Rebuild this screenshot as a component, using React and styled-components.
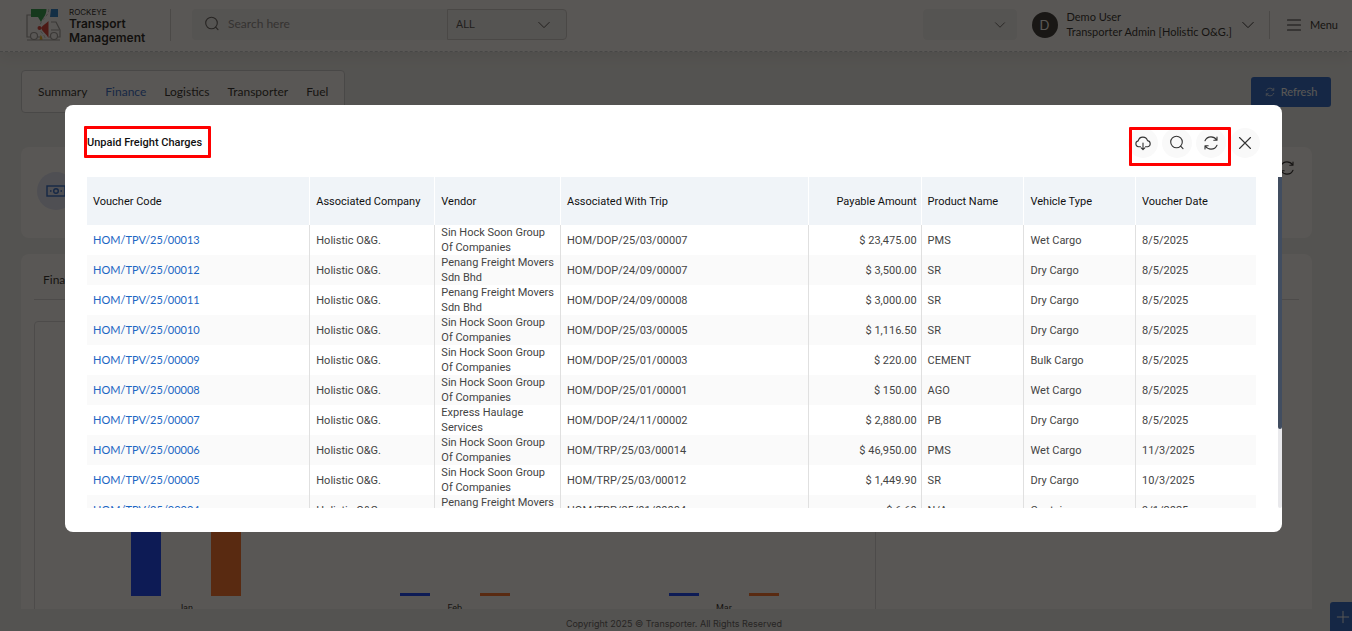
import React from "react";
import styled, { createGlobalStyle } from "styled-components";

const GlobalStyle = createGlobalStyle`
  * {
    box-sizing: border-box;
  }
  body {
    margin: 0;
    background: #eff1f0;
    overflow: hidden;
    font-family: Lato, "Liberation Sans", sans-serif;
    font-size: 11px;
    color: #1c1c20;
  }
  button, input, select {
    font: inherit;
    color: inherit;
    border: 0;
    background: none;
    padding: 0;
    margin: 0;
  }
  a {
    text-decoration: none;
    color: inherit;
  }
`;

const Page = styled.div`
  display: flex;
  flex-direction: column;
  height: 100vh;
`;

const Header = styled.header`
  display: flex;
  align-items: center;
  height: 52px;
  flex: none;
  padding: 0 14px 2px 26px;
  background: #fff;
  border-bottom: 1px dashed #c4c8cc;
  box-shadow: 0 4px 14px rgba(0, 0, 0, 0.08);
`;

const Brand = styled.a`
  display: flex;
  align-items: center;
  gap: 8px;
  width: 145px;
  height: 32px;
  border-right: 1px solid #cfcfcf;
  font-family: Inter, sans-serif;
`;

const BrandText = styled.span`
  display: flex;
  flex-direction: column;
  padding-top: 4px;
  font-size: 12px;
  font-weight: 600;
  line-height: 14px;
  color: #111;
`;

const BrandSmall = styled.span`
  font-size: 8px;
  font-weight: 400;
  line-height: 9px;
`;

const SearchBox = styled.label`
  display: flex;
  align-items: center;
  gap: 8px;
  height: 31px;
  width: 255px;
  margin-left: 21px;
  padding: 0 0 2px 12px;
  background: #f2f3f4;
  border-radius: 4px 0 0 4px;
  color: #555;
  font-size: 12px;
`;

const SearchInput = styled.input`
  flex: 1;
  min-width: 0;
  outline: none;
  &::placeholder {
    color: #888;
    opacity: 1;
  }
`;

const SelectWrap = styled.div`
  display: flex;
  align-items: center;
  height: 31px;
  width: ${(p) => p.$width};
  padding: 0 ${(p) => (p.$outlined ? "15px" : "10px")} 0 8px;
  background: #f2f3f4;
  border: 1px solid ${(p) => (p.$outlined ? "#ccc" : "#f2f3f4")};
  border-radius: ${(p) => (p.$outlined ? "0 4px 4px 0" : "4px")};
  color: #444;
`;

const Select = styled.select`
  flex: 1;
  min-width: 0;
  appearance: none;
  outline: none;
  font-family: Roboto, sans-serif;
  font-size: 11px;
`;

const Spacer = styled.div`
  flex: 1;
`;

const UserMenu = styled.button`
  display: flex;
  align-items: center;
  gap: 9px;
  height: 28px;
  margin-left: 15px;
  padding-right: 14px;
  border-right: 1px solid #cfcfcf;
  text-align: left;
  line-height: 15px;
`;

const UserText = styled.span`
  padding-bottom: 2px;
`;

const Avatar = styled.span`
  width: 26px;
  height: 26px;
  border-radius: 50%;
  background: #2a2a2a;
  color: #fff;
  font-size: 13px;
  line-height: 26px;
  text-align: center;
`;

const MenuButton = styled.button`
  display: flex;
  align-items: center;
  gap: 8px;
  margin-left: 16px;
`;

const Main = styled.main`
  flex: 1;
  min-height: 0;
  display: flex;
  flex-direction: column;
  gap: 16px;
  padding: 18px 40px 0 21px;
`;

const TopRow = styled.div`
  display: flex;
  justify-content: space-between;
  align-items: center;
  height: 43px;
  margin: 0 -19px 18px 0;
`;

const Tabs = styled.nav`
  display: flex;
  align-items: center;
  gap: 18px;
  height: 43px;
  padding: 0 16px;
  background: #fff;
  border: 1px solid #c9ccd0;
  border-radius: 4px;
  font-size: 12px;
`;

const Tab = styled.a`
  color: ${(p) => (p.$active ? "#2563c9" : "#1c1c20")};
`;

const RefreshButton = styled.button`
  display: flex;
  align-items: center;
  justify-content: center;
  gap: 6px;
  width: 80px;
  height: 30px;
  border-radius: 3px;
  background: #1c5fc8;
  color: #fff;
`;

const Card = styled.section`
  background: #fff;
  border-radius: 8px;
`;

const SummaryCard = styled(Card)`
  display: flex;
  align-items: flex-start;
  justify-content: space-between;
  height: 91px;
  flex: none;
  padding: 13px 17px 13px 16px;
`;

const Badge = styled.span`
  display: flex;
  align-items: center;
  justify-content: center;
  width: 38px;
  height: 38px;
  margin-top: 12px;
  border-radius: 50%;
  background: #dde3f8;
  color: #1c5fc8;
`;

const ChartCard = styled(Card)`
  display: flex;
  flex-direction: column;
  flex: 1;
  min-height: 0;
  padding: 0 13px;
  overflow: hidden;
  border-radius: 8px 8px 0 0;
`;

const ChartTitle = styled.h2`
  margin: 0;
  padding: 18px 9px 0;
  height: 46px;
  flex: none;
  border-bottom: 1px solid #d5d7da;
  font-size: 12px;
  font-weight: 400;
`;

const ChartPanel = styled.div`
  display: flex;
  width: 66.6%;
  height: 300px;
  flex: none;
  margin-top: 21px;
  padding: 0 17px 0 16px;
  border: 1px solid #d5d7da;
  border-radius: 4px;
`;

const Month = styled.div`
  flex: 1;
  display: flex;
  flex-direction: column;
  align-items: center;
  padding-top: 154px;
  font: 9px/16px Roboto, sans-serif;
`;

const Bars = styled.div`
  display: flex;
  align-items: flex-end;
  gap: 50px;
  height: 120px;
  margin-bottom: 4px;
`;

const Bar = styled.div`
  width: 30px;
  background: ${(p) => p.$color};
`;

const Footer = styled.footer`
  flex: none;
  height: 22px;
  padding: 8px 4px 0 0;
  text-align: center;
  font: 9px/13px Inter, sans-serif;
  color: #55565a;
`;

const AddButton = styled.button`
  position: fixed;
  right: 0;
  bottom: 0;
  display: flex;
  align-items: center;
  justify-content: center;
  width: 22px;
  height: 29px;
  padding-left: 4px;
  border-radius: 3px 0 0 0;
  background: #1c5fc8;
  color: #fff;
`;

const Overlay = styled.div`
  position: fixed;
  inset: 0;
  padding: 105px 70px 99px 65px;
  background: rgba(18, 16, 13, 0.7);
`;

const Modal = styled.div`
  padding: 21px 0 24px;
  background: #fff;
  border-radius: 8px;
  font-family: Roboto, sans-serif;
  font-size: 11px;
`;

const ModalHeader = styled.div`
  display: flex;
  justify-content: space-between;
  height: 51px;
  padding: 0 22px 0 19px;
`;

const ModalTitle = styled.h1`
  margin: 0;
  height: 32px;
  padding-right: 6px;
  border: 3px solid #f00;
  border-radius: 1px;
  font-size: 11px;
  font-weight: 500;
  line-height: 27px;
  color: #111;
`;

const Actions = styled.div`
  display: flex;
  gap: 4px;
  padding-top: 2px;
`;

const Highlighted = styled.div`
  position: relative;
  display: flex;
  gap: 4px;
  height: 30px;

  &::after {
    content: "";
    position: absolute;
    inset: -1px -5px -8px 1px;
    border: 3px solid #f00;
    border-radius: 1px;
    pointer-events: none;
  }
`;

const RoundButton = styled.button`
  display: flex;
  align-items: center;
  justify-content: center;
  width: 30px;
  height: 30px;
  border-radius: 50%;
  background: #f9f9f9;
  color: #333;
`;

const TableArea = styled.div`
  display: flex;
  gap: 22px;
  height: 331px;
  padding-left: 22px;
`;

const TableClip = styled.div`
  flex: 1;
  overflow: hidden;
`;

const ScrollTrack = styled.div`
  width: 4px;
  background: #e9e9ec;
  border-radius: 2px;
`;

const ScrollThumb = styled.div`
  height: 76%;
  background: #414d60;
  border-radius: 0 0 2px 2px;
`;

const Table = styled.table`
  width: 100%;
  table-layout: fixed;
  border-collapse: separate;
  border-spacing: 0;
  color: #444;
`;

const Th = styled.th`
  width: ${(p) => p.$width};
  height: 48px;
  padding: 0 4px 0 6px;
  background: #f0f4f8;
  border-right: 1px solid #fff;
  font-weight: 400;
  text-align: ${(p) => (p.$right ? "right" : "left")};
  white-space: nowrap;
  color: #111;

  &:last-child {
    border-right: 0;
  }
`;

const Td = styled.td`
  height: 30px;
  padding: 0 4px 0 6px;
  border-right: 1px solid #e0e0e0;
  line-height: 15px;
  text-align: ${(p) => (p.$right ? "right" : "left")};

  tr:nth-child(even) > & {
    background: #fafafa;
  }
  &:last-child {
    border-right: 0;
  }
`;

const VoucherLink = styled.a`
  font-family: Lato, sans-serif;
  font-size: 11px;
  color: #1b66c4;
`;

const columns = [
  { label: "Voucher Code", width: "19.1%" },
  { label: "Associated Company", width: "10.7%" },
  { label: "Vendor", width: "10.75%" },
  { label: "Associated With Trip", width: "21.2%" },
  { label: "Payable Amount", width: "9.65%", right: true },
  { label: "Product Name", width: "8.8%" },
  { label: "Vehicle Type", width: "9.55%" },
  { label: "Voucher Date" },
];

const SIN = "Sin Hock Soon Group Of Companies";
const PENANG = "Penang Freight Movers Sdn Bhd";

const rows = [
  ["HOM/TPV/25/00013", SIN, "HOM/DOP/25/03/00007", "$ 23,475.00", "PMS", "Wet Cargo", "8/5/2025"],
  ["HOM/TPV/25/00012", PENANG, "HOM/DOP/24/09/00007", "$ 3,500.00", "SR", "Dry Cargo", "8/5/2025"],
  ["HOM/TPV/25/00011", PENANG, "HOM/DOP/24/09/00008", "$ 3,000.00", "SR", "Dry Cargo", "8/5/2025"],
  ["HOM/TPV/25/00010", SIN, "HOM/DOP/25/03/00005", "$ 1,116.50", "SR", "Dry Cargo", "8/5/2025"],
  ["HOM/TPV/25/00009", SIN, "HOM/DOP/25/01/00003", "$ 220.00", "CEMENT", "Bulk Cargo", "8/5/2025"],
  ["HOM/TPV/25/00008", SIN, "HOM/DOP/25/01/00001", "$ 150.00", "AGO", "Wet Cargo", "8/5/2025"],
  ["HOM/TPV/25/00007", "Express Haulage Services", "HOM/DOP/24/11/00002", "$ 2,880.00", "PB", "Dry Cargo", "8/5/2025"],
  ["HOM/TPV/25/00006", SIN, "HOM/TRP/25/03/00014", "$ 46,950.00", "PMS", "Wet Cargo", "11/3/2025"],
  ["HOM/TPV/25/00005", SIN, "HOM/TRP/25/03/00012", "$ 1,449.90", "SR", "Dry Cargo", "10/3/2025"],
  ["HOM/TPV/25/00004", PENANG, "HOM/TRP/25/01/00004", "$ 6.60", "N/A", "Container", "9/1/2025"],
];

const months = [
  { name: "Jan", first: 120, second: 120 },
  { name: "Feb", first: 3, second: 3 },
  { name: "Mar", first: 3, second: 3 },
];

const Icon = ({ size = 16, children }) => (
  <svg
    width={size}
    height={size}
    viewBox="0 0 16 16"
    fill="none"
    stroke="currentColor"
    strokeWidth="1.1"
    strokeLinecap="round"
    strokeLinejoin="round"
    aria-hidden="true"
  >
    {children}
  </svg>
);

const SearchIcon = () => (
  <Icon>
    <circle cx="7.5" cy="7" r="5.8" />
    <path d="M11.6 11.1l2.4 2.6" />
  </Icon>
);

const RefreshIcon = ({ size }) => (
  <Icon size={size}>
    <path d="M2 5.800C3 3.400 5.300 1.900 8 1.900c2.300 0 4.300 1.100 5.500 2.900M14 2v3.200h-3.200" />
    <path d="M14 10.200c-1 2.400-3.300 3.900-6 3.900-2.300 0-4.300-1.100-5.500-2.900M2 14v-3.200h3.200" />
  </Icon>
);

const CloudIcon = () => (
  <Icon>
    <path d="M5.500 11.800H3.500a3 3 0 0 1-.3-5.900A4.800 4.800 0 0 1 12.500 5.600a3.150 3.150 0 0 1 .2 6.200h-2.200" />
    <path d="M8 8v6.500M6.200 12.800L8 14.600l1.800-1.800" />
  </Icon>
);

const CloseIcon = () => (
  <Icon>
    <path d="M2.500 2.500l11 11M13.500 2.500l-11 11" />
  </Icon>
);

const ChevronDown = ({ size }) => (
  <Icon size={size}>
    <path d="M2 5l6 6 6-6" />
  </Icon>
);

const MenuIcon = () => (
  <Icon>
    <path d="M1.500 3h13M1.500 8h13M1.500 13h13" />
  </Icon>
);

const PlusIcon = () => (
  <Icon size={14}>
    <path d="M8 1.500v13M1.500 8h13" />
  </Icon>
);

const MoneyIcon = () => (
  <svg width="20" height="12" viewBox="0 0 20 12" fill="none" stroke="currentColor" strokeWidth="1.400" aria-hidden="true">
    <rect x="1" y="1" width="18" height="10" />
    <circle cx="10" cy="6" r="2.300" />
    <path d="M4 6h1.500M14.500 6H16" />
  </svg>
);

const Logo = () => (
  <svg width="35" height="33" viewBox="0 0 35 33" fill="none" aria-hidden="true">
    <path d="M5 1h15.500c0 6-3 8-5.500 13L12 9H5z" fill="#1f9a45" />
    <path d="M25 1h7v8h-8z" fill="#1878c8" />
    <path d="M22.500 13v17c-2-4-6-6-7.500-10 2-3 4.500-4 7.500-7z" fill="#d8342c" />
    <path d="M14.500 27c1.500 1 2 3 2 5h-3z" fill="#f1b51c" />
    <path d="M22.800 1c0 9-9 9-9 19 0 5 5.500 6 5.500 12" stroke="#bbb" strokeDasharray="3 2" />
    <path d="M5 7H1v22h3M12 29h2M25 14h5l4 8v7h-2M25 22h8M23 29h1" stroke="#999" strokeWidth="1.200" />
    <circle cx="8" cy="28" r="3.500" stroke="#999" strokeWidth="1.200" />
    <circle cx="28" cy="28" r="3.500" stroke="#999" strokeWidth="1.200" />
    <path d="M1 32h33" stroke="#999" />
    <circle cx="13.500" cy="20" r="2" fill="#d8342c" />
  </svg>
);

function App() {
  return (
    <>
      <GlobalStyle />
      <Page>
        <Header>
          <Brand href="#">
            <Logo />
            <BrandText>
              <BrandSmall>ROCKEYE</BrandSmall>
              <span>Transport</span>
              <span>Management</span>
            </BrandText>
          </Brand>
          <SearchBox>
            <SearchIcon />
            <SearchInput placeholder="Search here" aria-label="Search" />
          </SearchBox>
          <SelectWrap $width="120px" $outlined>
            <Select aria-label="Search scope">
              <option>ALL</option>
            </Select>
            <ChevronDown size={14} />
          </SelectWrap>
          <Spacer />
          <SelectWrap $width="94px">
            <Select aria-label="Company" />
            <ChevronDown size={12} />
          </SelectWrap>
          <UserMenu>
            <Avatar>D</Avatar>
            <UserText>
              Demo User
              <br />
              Transporter Admin [Holistic O&amp;G.]
            </UserText>
            <ChevronDown size={14} />
          </UserMenu>
          <MenuButton>
            <MenuIcon />
            Menu
          </MenuButton>
        </Header>

        <Main>
          <TopRow>
            <Tabs>
              <Tab href="#">Summary</Tab>
              <Tab href="#" $active>Finance</Tab>
              <Tab href="#">Logistics</Tab>
              <Tab href="#">Transporter</Tab>
              <Tab href="#">Fuel</Tab>
            </Tabs>
            <RefreshButton>
              <RefreshIcon size={10} />
              Refresh
            </RefreshButton>
          </TopRow>
          <SummaryCard>
            <Badge>
              <MoneyIcon />
            </Badge>
            <RefreshIcon />
          </SummaryCard>
          <ChartCard>
            <ChartTitle>Finance</ChartTitle>
            <ChartPanel>
              {months.map((m) => (
                <Month key={m.name}>
                  <Bars>
                    <Bar $color="#0037ff" style={{ height: m.first }} />
                    <Bar $color="#ff691b" style={{ height: m.second }} />
                  </Bars>
                  {m.name}
                </Month>
              ))}
            </ChartPanel>
          </ChartCard>
        </Main>
        <Footer>Copyright 2025 © Transporter. All Rights Reserved</Footer>
        <AddButton aria-label="Add">
          <PlusIcon />
        </AddButton>
      </Page>

      <Overlay>
        <Modal role="dialog" aria-labelledby="modal-title">
          <ModalHeader>
            <ModalTitle id="modal-title">Unpaid Freight Charges</ModalTitle>
            <Actions>
              <Highlighted>
                <RoundButton aria-label="Download"><CloudIcon /></RoundButton>
                <RoundButton aria-label="Search"><SearchIcon /></RoundButton>
                <RoundButton aria-label="Refresh"><RefreshIcon /></RoundButton>
              </Highlighted>
              <RoundButton aria-label="Close"><CloseIcon /></RoundButton>
            </Actions>
          </ModalHeader>
          <TableArea>
            <TableClip>
              <Table>
                <thead>
                  <tr>
                    {columns.map((c) => (
                      <Th key={c.label} $width={c.width} $right={c.right}>{c.label}</Th>
                    ))}
                  </tr>
                </thead>
                <tbody>
                  {rows.map(([code, vendor, trip, amount, product, vehicle, date]) => (
                    <tr key={code}>
                      <Td><VoucherLink href="#">{code}</VoucherLink></Td>
                      <Td>Holistic O&amp;G.</Td>
                      <Td>{vendor}</Td>
                      <Td>{trip}</Td>
                      <Td $right>{amount}</Td>
                      <Td>{product}</Td>
                      <Td>{vehicle}</Td>
                      <Td>{date}</Td>
                    </tr>
                  ))}
                </tbody>
              </Table>
            </TableClip>
            <ScrollTrack>
              <ScrollThumb />
            </ScrollTrack>
          </TableArea>
        </Modal>
      </Overlay>
    </>
  );
}

export default App;
